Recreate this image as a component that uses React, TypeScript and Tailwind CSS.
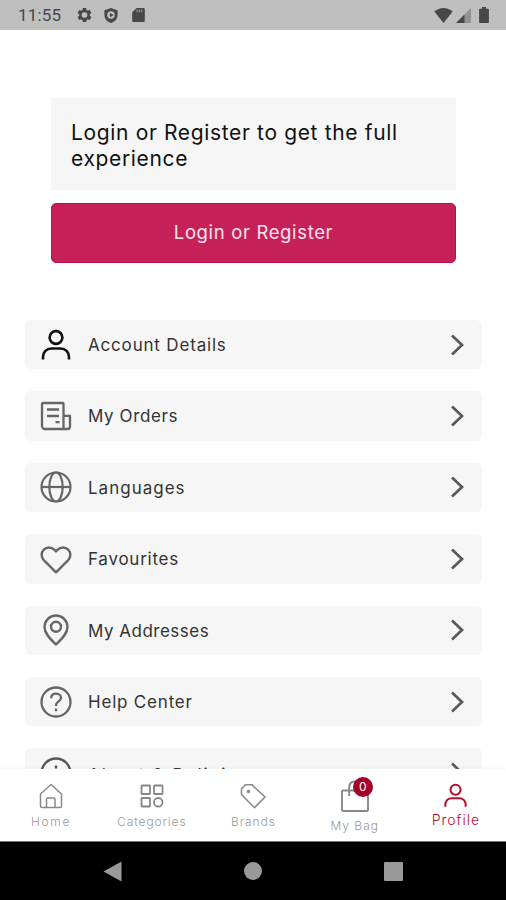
import React from 'react';

type IconProps = { className?: string };

const UserIcon = ({ className }: IconProps) => (
  <svg viewBox="0 0 32 32" fill="none" stroke="currentColor" strokeWidth="2.6" className={className}>
    <circle cx="16" cy="8.500" r="6.400" />
    <path d="M3 30.500v-2.500c0-5 3.500-8.500 8.500-8.500h9c5 0 8.500 3.500 8.500 8.500v2.500" />
  </svg>
);

const OrdersIcon = ({ className }: IconProps) => (
  <svg viewBox="0 0 32 32" fill="none" stroke="currentColor" strokeWidth="2.3" strokeLinejoin="round" className={className}>
    <path d="M3 3h19.500a1 1 0 0 1 1 1v25H5a3 3 0 0 1-3-3V4a1 1 0 0 1 1-1z" />
    <path d="M23.500 15.800H30v10.700a2.500 2.500 0 0 1-2.500 2.500h-4" />
    <path d="M7 9.500h12M7 16h12M15.500 22.200h4" />
  </svg>
);

const GlobeIcon = ({ className }: IconProps) => (
  <svg viewBox="0 0 32 32" fill="none" stroke="currentColor" strokeWidth="2.2" className={className}>
    <circle cx="16" cy="16" r="14.500" />
    <ellipse cx="16" cy="16" rx="6.700" ry="14.500" />
    <path d="M1.500 16h29" />
  </svg>
);

const HeartIcon = ({ className }: IconProps) => (
  <svg viewBox="0 0 32 32" fill="none" stroke="currentColor" strokeWidth="2.4" strokeLinejoin="round" className={className}>
    <path d="M16 29.300 3.800 17.200a7.600 7.600 0 0 1 0-10.500 7.400 7.400 0 0 1 10.500 0L16 8.400l1.700-1.700a7.400 7.400 0 0 1 10.500 0 7.600 7.600 0 0 1 0 10.500z" />
  </svg>
);

const PinIcon = ({ className }: IconProps) => (
  <svg viewBox="0 0 32 32" fill="none" stroke="currentColor" strokeWidth="2.4" strokeLinejoin="round" className={className}>
    <path d="M16 30.500C11 25.500 4.500 20 4.500 13a11.500 11.500 0 0 1 23 0c0 7-6.500 12.500-11.500 17.500z" />
    <circle cx="16" cy="12.800" r="5" />
  </svg>
);

const HelpIcon = ({ className }: IconProps) => (
  <svg viewBox="0 0 32 32" fill="none" stroke="currentColor" strokeWidth="2.3" className={className}>
    <circle cx="16" cy="16" r="14.500" />
    <path d="M11.200 12.200c0-2.800 2-4.500 4.900-4.500s4.900 1.800 4.900 4.300c0 3.300-5 3.600-5 7.300v.7M16 22.500v2.700" />
  </svg>
);

const InfoIcon = ({ className }: IconProps) => (
  <svg viewBox="0 0 32 32" fill="none" stroke="currentColor" strokeWidth="2.3" className={className}>
    <circle cx="16" cy="16" r="14.500" />
    <path d="M16 8.500v3M16 14v10" />
  </svg>
);

const HomeIcon = ({ className }: IconProps) => (
  <svg viewBox="0 0 24 26" fill="none" stroke="currentColor" strokeWidth="1.5" strokeLinejoin="round" className={className}>
    <path d="M1.500 11 12 1.500 22.500 11v12a1.500 1.500 0 0 1-1.500 1.500H3A1.500 1.500 0 0 1 1.500 23z" />
    <path d="M7.500 24.500v-8.500a1 1 0 0 1 1-1h6.500a1 1 0 0 1 1 1v8.500" />
  </svg>
);

const CategoriesIcon = ({ className }: IconProps) => (
  <svg viewBox="0 0 24 24" fill="none" stroke="currentColor" strokeWidth="1.8" className={className}>
    <rect x="1.500" y="1.500" width="8.500" height="8.500" rx=".5" />
    <rect x="14" y="1.500" width="8.500" height="8.500" rx=".5" />
    <rect x="1.500" y="14" width="8.500" height="8.500" rx=".5" />
    <circle cx="18.250" cy="18.250" r="4.250" />
  </svg>
);

const TagIcon = ({ className }: IconProps) => (
  <svg viewBox="0 0 26 26" fill="none" stroke="currentColor" strokeWidth="1.6" strokeLinejoin="round" className={className}>
    <path d="M1.500 6 5.500 1.700h6.300L25 14 14.500 24.700 1.500 11.500z" />
    <circle cx="8.500" cy="8.500" r="1" fill="currentColor" />
  </svg>
);

const BagIcon = ({ className }: IconProps) => (
  <svg viewBox="0 0 28 32" fill="none" stroke="currentColor" strokeWidth="1.9" strokeLinejoin="round" className={className}>
    <rect x="1" y="10.500" width="26" height="20.500" rx="1" />
    <path d="M8.200 16V8c0-4 2-6.500 5.800-6.500s5.800 2.500 5.800 6.500v8" />
  </svg>
);

const Chevron = () => (
  <svg viewBox="0 0 14 22" fill="none" stroke="#595959" strokeWidth="2.7" className="h-[22px] w-[14px]">
    <path d="m2 1.500 10 9.500-10 9.500" />
  </svg>
);

const StatusBar = () => (
  <header className="flex h-[30px] shrink-0 items-center justify-between bg-[#bfbfbf] pr-[16px] pl-[18px] text-[#484848]">
    <div className="flex items-center">
      <span className="w-[58px] font-[Roboto] text-[17px] leading-none tracking-[0.2px]">11:55</span>
      <svg viewBox="0 0 24 24" fill="currentColor" className="h-[18px] w-[17px]">
        <path
          fillRule="evenodd"
          d="M19.430 13a7.800 7.800 0 0 0 0-2l2.100-1.650a.5.5 0 0 0 .12-.64l-2-3.460a.5.5 0 0 0-.6-.22l-2.500 1a7.300 7.300 0 0 0-1.700-1l-.38-2.650A.5.5 0 0 0 14 2h-4a.5.5 0 0 0-.5.420L9.130 5.100a7.700 7.700 0 0 0-1.700 1l-2.480-1a.5.5 0 0 0-.6.220l-2 3.460a.5.5 0 0 0 .12.640L4.580 11a7.900 7.900 0 0 0 0 2l-2.110 1.650a.5.5 0 0 0-.12.640l2 3.460c.12.220.38.300.6.220l2.500-1a7.300 7.300 0 0 0 1.700 1l.37 2.650c.04.240.25.420.5.420h4c.25 0 .46-.18.500-.42l.37-2.650a7.700 7.700 0 0 0 1.700-1l2.480 1c.23.090.49 0 .6-.22l2-3.460a.5.5 0 0 0-.12-.64zM12 16a4 4 0 1 1 0-8 4 4 0 0 1 0 8z"
        />
      </svg>
      <svg viewBox="0 0 16 18" fill="currentColor" className="ml-[10px] h-[17px] w-[16px]">
        <path fillRule="evenodd" d="M8 1l7 2.500V8c0 4.500-2.800 7.800-7 9-4.200-1.200-7-4.500-7-9V3.500zM8 4.500a4 4 0 1 0 4 4 4 4 0 0 0-4-4zm-1.200 1.800L11 8.500l-4.200 2.400z" />
      </svg>
      <svg viewBox="0 0 14 16" fill="currentColor" className="ml-[13px] h-4 w-[13px]">
        <path d="M5 .5h7.500a1.300 1.300 0 0 1 1.300 1.300v12.500a1.300 1.300 0 0 1-1.300 1.300h-11A1.300 1.300 0 0 1 .2 14.300V5z" />
        <path d="M5.500 2v3M8 2v3M10.500 2v3" stroke="#999999" strokeWidth="1.2" />
      </svg>
    </div>
    <div className="flex items-center">
      <svg viewBox="0 0 20 16" fill="currentColor" className="h-[15px] w-[19px]">
        <path d="M10 16 .2 3.800C3 1.300 6.300 0 10 0s7 1.300 9.800 3.800z" />
      </svg>
      <svg viewBox="0 0 15 15" className="ml-[3px] h-[15px] w-[15px]">
        <path d="M15 0v15H0z" fill="#929292" />
        <path d="M8.500 6.500V15H0z" fill="currentColor" />
      </svg>
      <svg viewBox="0 0 10 16" fill="currentColor" className="mr-px ml-[8px] h-4 w-[10px]">
        <path d="M3 0h4v1.700h2.200a.7.700 0 0 1 .7.700v12.800a.7.700 0 0 1-.7.700H.8a.7.700 0 0 1-.7-.7V2.400a.7.700 0 0 1 .7-.7H3z" />
      </svg>
    </div>
  </header>
);

const menuItems = [
  { label: 'Account Details', icon: UserIcon, color: 'text-[#111111]', spacing: 'pt-[3px] tracking-[0.82px]' },
  { label: 'My Orders', icon: OrdersIcon, color: 'text-[#666666]', spacing: 'pt-[2px] tracking-[0.6px]' },
  { label: 'Languages', icon: GlobeIcon, color: 'text-[#666666]', spacing: 'pt-[3px] tracking-[1px]' },
  { label: 'Favourites', icon: HeartIcon, color: 'text-[#666666]', spacing: 'pt-[2px] tracking-[0.75px]' },
  { label: 'My Addresses', icon: PinIcon, color: 'text-[#666666]', spacing: 'pt-[3px] tracking-[0.5px]' },
  { label: 'Help Center', icon: HelpIcon, color: 'text-[#666666]', spacing: 'pt-[3px] tracking-[0.8px]' },
  { label: 'About & Policies', icon: InfoIcon, color: 'text-[#555555]', spacing: 'pt-[6px] tracking-[2px]' },
];

const TabBar = () => (
  <nav className="grid h-[73px] shrink-0 grid-cols-5 border-b border-[#777777] bg-white text-[#888888] shadow-[0_-1px_3px_rgba(0,0,0,0.03)]">
    <div className="flex flex-col items-center pt-[14px]">
      <HomeIcon className="h-[26px] w-[24px]" />
      <span className="mt-[5px] pl-px text-[12px] leading-4 font-light tracking-[1.7px] text-[#999999]">Home</span>
    </div>
    <div className="flex flex-col items-center pt-[15px]">
      <CategoriesIcon className="h-6 w-6" />
      <span className="mt-[6px] text-[12px] leading-4 font-light tracking-[0.9px] text-[#999999]">Categories</span>
    </div>
    <div className="flex flex-col items-center pt-[14px]">
      <TagIcon className="h-[26px] w-[26px]" />
      <span className="mt-[5px] pl-px text-[12px] leading-4 font-light tracking-[1px] text-[#999999]">Brands</span>
    </div>
    <div className="flex flex-col items-center pt-[11px] pl-px">
      <div className="relative">
        <BagIcon className="h-[32px] w-[28px]" />
        <span className="absolute -top-[3px] left-[12px] flex size-[20px] items-center justify-center rounded-full bg-[#a40029] text-[12px] text-white">
          0
        </span>
      </div>
      <span className="mt-[6px] text-[12px] leading-4 font-light tracking-[1px] text-[#999999]">My Bag</span>
    </div>
    <div className="flex flex-col items-center pt-[14px] pl-px text-[#b01030]">
      <UserIcon className="h-[25px] w-[25px]" />
      <span className="mt-[4px] text-[14px] leading-4 font-light tracking-[1px]">Profile</span>
    </div>
  </nav>
);

const SystemNav = () => (
  <footer className="grid h-[58px] shrink-0 grid-cols-[142px_140px_141px] items-center justify-items-center bg-black pl-[41px]">
    <svg viewBox="0 0 19 21" fill="#999999" className="h-[21px] w-[19px]">
      <path d="M18.500.5v20L.5 10.500z" />
    </svg>
    <span className="size-[18px] rounded-full bg-[#999999]" />
    <span className="size-[19px] rounded-[1px] bg-[#999999]" />
  </footer>
);

export default function App() {
  return (
    <div className="flex h-[900px] w-[506px] flex-col overflow-hidden bg-white font-[Inter,sans-serif]">
      <StatusBar />
      <main className="min-h-0 flex-1 overflow-hidden">
        <section className="mt-[68px] ml-[51px] w-[405px]">
          <p className="h-[92px] bg-[#f6f6f6] pt-[22px] pl-5 text-[21px] leading-[26px] tracking-[0.65px] text-[#111111]">
            Login or Register to get the full
            <br />
            experience
          </p>
          <button className="mt-[13px] h-[60px] w-full rounded-[5px] border border-[#b90f47] bg-[#c52158] text-[18.5px] tracking-[0.65px] text-[#ffe4ee]">
            Login or Register
          </button>
        </section>
        <ul className="mt-[57px] flex flex-col gap-[22px] pr-6 pl-[25px]">
          {menuItems.map(({ label, icon: Icon, color, spacing }) => (
            <li key={label} className="flex h-[49.4px] shrink-0 items-center rounded-[6px] bg-[#f6f6f6] pr-[18px] pl-[15px]">
              <Icon className={`size-8 ${color}`} />
              <span className={`ml-4 flex-1 text-[17px] text-[#333333] ${spacing}`}>{label}</span>
              <Chevron />
            </li>
          ))}
        </ul>
      </main>
      <TabBar />
      <SystemNav />
    </div>
  );
}
